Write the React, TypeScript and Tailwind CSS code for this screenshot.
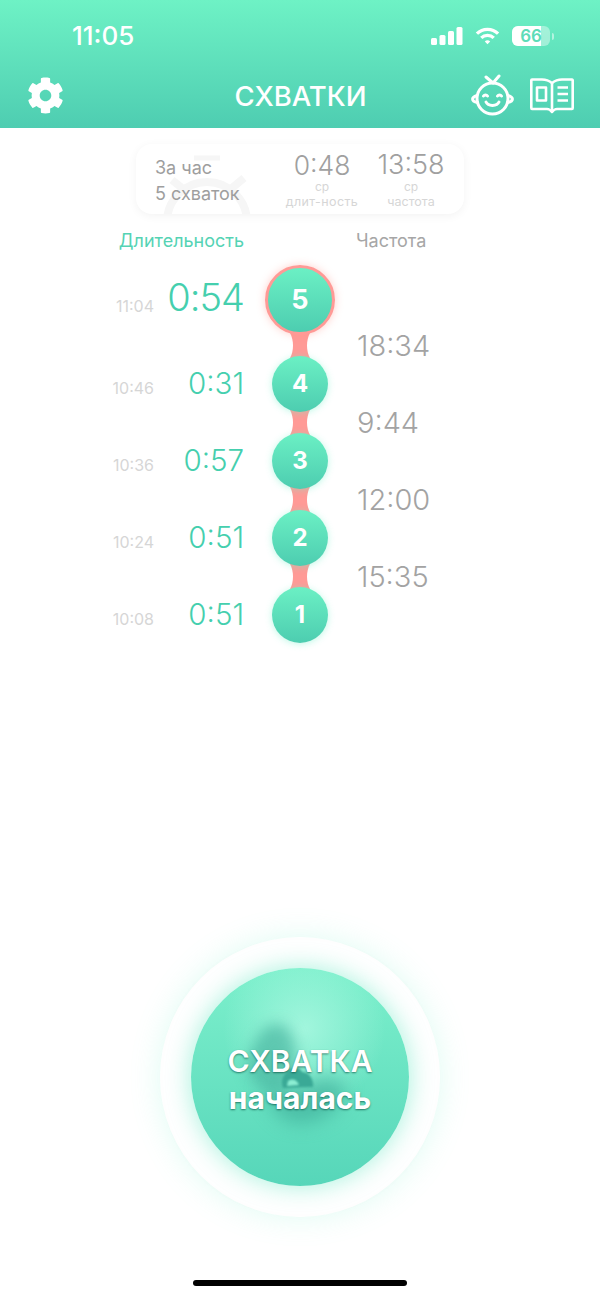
import { FaCog } from "react-icons/fa";

const font = { sans: "font-['Inter','Noto_Sans',sans-serif]" };

const rows = [
  { n: 5, time: "11:04", dur: "0:54", big: true },
  { n: 4, time: "10:46", dur: "0:31" },
  { n: 3, time: "10:36", dur: "0:57" },
  { n: 2, time: "10:24", dur: "0:51" },
  { n: 1, time: "10:08", dur: "0:51" },
];

const freqs = ["18:34", "9:44", "12:00", "15:35"];

function StatusIcons() {
  return (
    <div className="flex items-center gap-[12px]">
      <svg width="32" height="20" viewBox="0 0 32 20" fill="white">
        <rect x="0" y="12" width="6" height="7" rx="1.5" />
        <rect x="8.5" y="9" width="6" height="10" rx="1.5" />
        <rect x="17" y="5" width="6" height="14" rx="1.5" />
        <rect x="25.5" y="1" width="6" height="18" rx="1.5" />
      </svg>
      <svg width="25" height="20" viewBox="0 0 26 20" fill="none" stroke="white" strokeWidth="3.4">
        <path d="M2 7.5 C8 1.5 18 1.5 24 7.5" />
        <path d="M6.5 12 C10 8.5 16 8.5 19.5 12" />
        <path d="M10.2 15.6 L13 18.6 L15.8 15.6 C14 14 12 14 10.2 15.6 Z" fill="white" stroke="none" />
      </svg>
      <div className="flex items-center gap-[2px]">
        <div className="relative flex h-[20px] w-[38px] items-center justify-center overflow-hidden rounded-[6px] bg-white/40">
          <div className="absolute left-0 top-0 h-full w-[29px] bg-white" />
          <span className="relative text-[17px] font-semibold leading-none text-[#5ddcb8]">66</span>
        </div>
        <div className="h-[7px] w-[2px] rounded-r bg-white/50" />
      </div>
    </div>
  );
}

function BabyIcon() {
  return (
    <svg width="44" height="44" viewBox="0 0 44 44" fill="none" stroke="white" strokeWidth="3" strokeLinecap="round" strokeLinejoin="round">
      <path d="M15 3 L22 9 L28 2" />
      <circle cx="21.5" cy="24.5" r="15.5" />
      <path d="M6 21.5 C3 22.5 1.6 23.8 1.6 25 C1.6 26.5 3.5 28 6.5 28.5" />
      <path d="M37 21.5 C40 22.5 41.4 23.8 41.4 25 C41.4 26.5 39.5 28 36.5 28.5" />
      <path d="M12.5 22 C13.5 20.5 15.5 20.5 16.5 22" />
      <path d="M26.5 22 C27.5 20.5 29.5 20.5 30.5 22" />
      <path d="M15 28 C17 32.5 26 32.5 28 28" />
    </svg>
  );
}

function BookIcon() {
  return (
    <svg width="44" height="36" viewBox="0 0 44 36" fill="none" stroke="white" strokeWidth="2.6" strokeLinejoin="round">
      <path d="M22 5 C19 2.5 16 1.5 12 1.5 L2 1.5 C1.5 1.5 1.3 1.8 1.3 2.3 L1.3 30 C1.3 30.5 1.5 31 2 31 L17 31 C19.5 31 20.5 32 22 34 C23.5 32 24.5 31 27 31 L42 31 C42.5 31 42.7 30.5 42.7 30 L42.7 2.3 C42.7 1.8 42.5 1.5 42 1.5 L32 1.5 C28 1.5 25 2.5 22 5 Z" />
      <path d="M22 5 L22 34" />
      <rect x="7" y="9.5" width="9" height="13" />
      <path d="M27.5 9.5 L38 9.5 M27.5 16 L38 16 M27.5 22.5 L38 22.5" />
    </svg>
  );
}

function Connector() {
  return (
    <svg width="22" height="25" viewBox="0 0 22 25" className="-my-[2px] shrink-0" fill="#ff9a96">
      <path d="M1 0 L21 0 C17 7 17 18 21 25 L1 25 C5 18 5 7 1 0 Z" />
    </svg>
  );
}

function Bubble({ n, big }: { n: number; big?: boolean }) {
  if (big) {
    return (
      <div className="relative z-10 flex h-[70px] w-[70px] items-center justify-center rounded-full border-[3px] border-[#ff9a96] bg-gradient-to-b from-[#6bf0c4] to-[#4dcdb0] text-[27px] font-bold text-white shadow-[0_0_8px_rgba(255,150,140,0.45)]">
        {n}
      </div>
    );
  }
  return (
    <div className="relative z-10 flex h-[56px] w-[56px] items-center justify-center rounded-full bg-gradient-to-b from-[#6bf0c4] to-[#4dcdb0] text-[24px] font-bold text-white shadow-[0_1px_7px_rgba(110,240,200,0.45)]">
      {n}
    </div>
  );
}

export default function App() {
  return (
    <div className={`${font.sans} flex h-[1297px] w-[600px] flex-col overflow-hidden bg-white`}>
      {/* header */}
      <div className="flex h-[128px] shrink-0 flex-col bg-gradient-to-b from-[#6ef2c5] to-[#4ecdb1] text-white">
        <div className="flex items-center justify-between pl-[72px] pr-[46px] pt-[21px]">
          <span className="text-[26px] font-medium leading-[30px]">11:05</span>
          <StatusIcons />
        </div>
        <div className="mt-[23px] grid grid-cols-3 items-center pl-[27px] pr-[26px]">
          <FaCog className="-mt-[1px] h-[37px] w-[37px] text-white" />
          <span className="whitespace-nowrap text-center text-[27.5px] font-medium leading-[44px]">СХВАТКИ</span>
          <div className="flex items-center justify-end gap-[15px]">
            <BabyIcon />
            <BookIcon />
          </div>
        </div>
      </div>

      {/* summary card */}
      <div className="relative mx-auto mt-[16px] flex h-[70px] w-[328px] shrink-0 overflow-hidden rounded-[16px] bg-white pl-[19px] shadow-[0_2px_10px_rgba(0,0,0,0.05)]">
        <svg width="100" height="70" viewBox="0 0 100 70" className="absolute left-[24px] top-0" fill="none" stroke="#f6f6f6" strokeWidth="8">
          <path d="M34 14 L60 14" strokeWidth="5" />
          <circle cx="47" cy="78" r="40" />
          <path d="M72 44 L84 34" />
          <path d="M22 44 L12 36" />
        </svg>
        <div className="relative flex w-[126px] flex-col justify-center pt-[4px] text-[18px] leading-[26px] text-[#9e9e9e]">
          <span>За час</span>
          <span>5 схваток</span>
        </div>
        <div className="relative flex w-[82px] flex-col items-center pt-[6px]">
          <span className="text-[26.5px] font-light leading-[30px] text-[#a0a0a0]">0:48</span>
          <span className="text-[12px] leading-[14px] text-[#d6d6d6]">ср</span>
          <span className="whitespace-nowrap text-[12.5px] leading-[15px] tracking-[0.4px] text-[#d6d6d6]">длит-ность</span>
        </div>
        <div className="relative flex w-[96px] flex-col items-center pt-[6px]">
          <span className="text-[27px] font-light leading-[30px] text-[#a0a0a0]">13:58</span>
          <span className="text-[12px] leading-[14px] text-[#d6d6d6]">ср</span>
          <span className="whitespace-nowrap text-[12.5px] leading-[15px] text-[#d6d6d6]">частота</span>
        </div>
      </div>

      {/* column titles */}
      <div className="mt-[16px] flex h-[22px] shrink-0 text-[18px] leading-[22px]">
        <div className="w-[244px] text-right text-[#55d3b4]">Длительность</div>
        <div className="ml-[112px] text-[#a6a6a6]">Частота</div>
      </div>

      {/* timeline */}
      <div className="mt-[13px] flex shrink-0">
        <div className="flex w-[244px] flex-col items-end gap-[21px]">
          {rows.map((r) => (
            <div key={r.n} className={`flex w-full items-center justify-end ${r.big ? "h-[70px]" : "h-[56px]"}`}>
              <span className={`mr-auto w-[154px] text-right text-[16px] leading-[20px] text-[#d6d6d6] ${r.big ? "pt-[11px]" : "pt-[8px]"}`}>{r.time}</span>
              <span className={`font-[350] leading-none text-[#45cfae] ${r.big ? "-mt-[6px] text-[38px] tracking-[-1px]" : "-mt-px text-[29.5px]"}`}>{r.dur}</span>
            </div>
          ))}
        </div>
        <div className="ml-[21px] flex w-[70px] flex-col items-center">
          {rows.map((r, i) => (
            <div key={r.n} className="flex flex-col items-center">
              <Bubble n={r.n} big={r.big} />
              {i < rows.length - 1 && <Connector />}
            </div>
          ))}
        </div>
        <div className="ml-[22px] flex flex-col pt-[42px]">
          {freqs.map((f) => (
            <div key={f} className="flex h-[77px] items-center text-[29px] font-[350] leading-none text-[#a3a3a3]">
              {f}
            </div>
          ))}
        </div>
      </div>

      {/* main button */}
      <div className="mt-[294px] flex shrink-0 justify-center">
        <div className="flex h-[280px] w-[280px] items-center justify-center rounded-full bg-white shadow-[0_0_30px_rgba(110,240,200,0.22)]">
          <div className="relative flex h-[218px] w-[218px] flex-col items-center justify-center rounded-full bg-gradient-to-b from-[#7cf0cc] to-[#56d6b9] shadow-[0_0_26px_rgba(90,230,190,0.55)]">
            <div className="absolute inset-0 rounded-full bg-[radial-gradient(circle_at_52%_28%,rgba(170,248,225,0.85),rgba(170,248,225,0)_42%)]" />
            <svg width="218" height="218" viewBox="0 0 218 218" className="absolute inset-0">
              <path className="blur-[7px]" fill="#3fae9a" fillOpacity="0.6" d="M72 62 C88 48 102 60 104 80 C106 96 104 108 96 120 C80 128 58 118 56 100 C58 84 64 72 72 62 Z" />
              <path className="blur-[9px]" fill="#3fae9a" fillOpacity="0.65" d="M70 116 C90 124 110 122 126 112 C138 106 150 112 156 124 C146 148 120 160 98 154 C84 148 76 132 70 116 Z" />
              <path className="blur-[1px]" fill="#3aa996" d="M94 106 C100 98 108 98 111 104 C117 104 123 110 122 119 L92 120 C90 114 91 110 94 106 Z" />
              <path className="blur-[1px]" fill="#8ceed3" d="M97 113 C102 110 106 112 108 117 L96 118 Z" />
            </svg>
            <span className="relative text-[30px] font-semibold leading-[42px] text-white [text-shadow:0_1px_2px_rgba(0,70,55,0.65)]">СХВАТКА</span>
            <span className="relative text-[30px] font-bold leading-[32px] text-white [text-shadow:0_1px_2px_rgba(0,70,55,0.65)]">началась</span>
          </div>
        </div>
      </div>

      {/* home indicator */}
      <div className="mx-auto mt-[63px] h-[6px] w-[214px] shrink-0 rounded-full bg-black" />
    </div>
  );
}
